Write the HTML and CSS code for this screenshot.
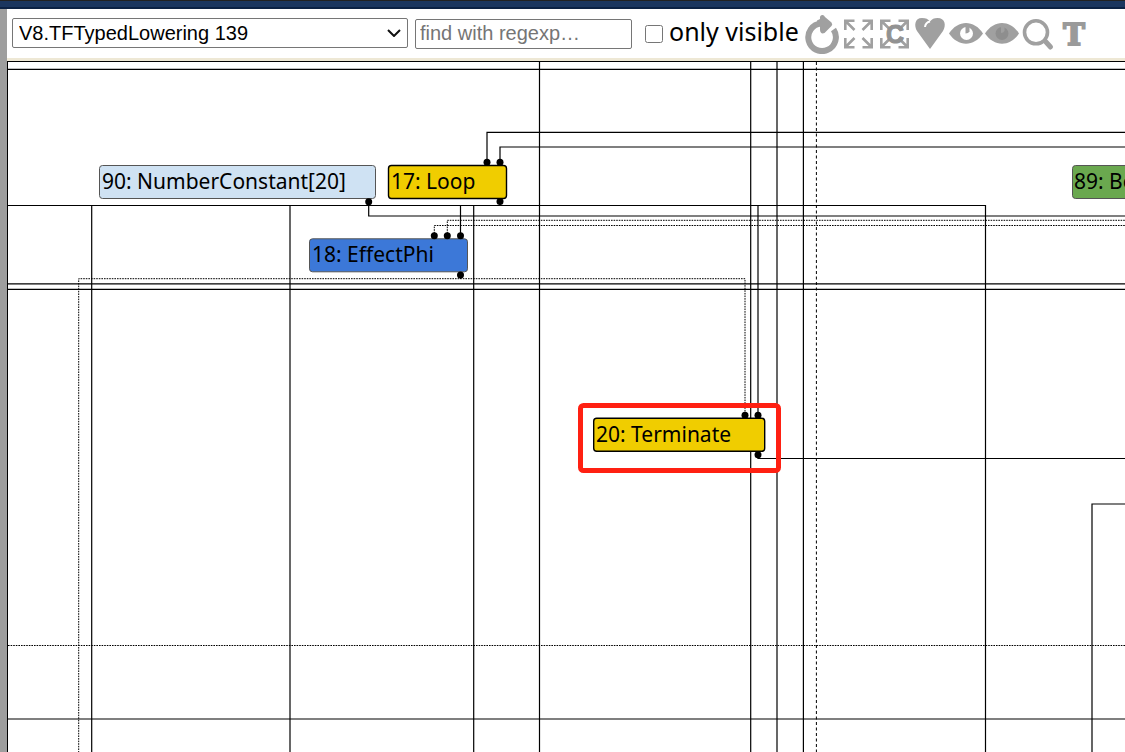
FILE: index.html
```html
<!doctype html>
<html lang="en">
<head>
<meta charset="utf-8">
<meta name="viewport" content="width=device-width, initial-scale=1">
<title>Turbolizer</title>
<link rel="stylesheet" href="styles.css">
</head>
<body>
<div class="topbar"></div>
<div class="workspace">
<div class="resizer"></div>
<main class="graph-pane">

<form class="toolbar">
  <div class="phase">
    <select class="phase-select" aria-label="Phase">
      <option>V8.TFTypedLowering 139</option>
    </select>
    <svg class="chevron" viewBox="0 0 14 8"><path d="M1 1 L7 7 L13 1"/></svg>
  </div>
  <input type="text" class="search-input" placeholder="find with regexp&hellip;" aria-label="Search">
  <div class="only-visible">
    <input type="checkbox" id="search-only-visible">
    <label for="search-only-visible">only visible</label>
  </div>
  <div class="tools">
    <button type="button" class="tool" aria-label="Layout graph"><svg viewBox="0 0 36 41">
      <path class="line" stroke-width="6" d="M17 10.500 A13.800 13.800 0 1 0 29.500 16.500"/>
      <path d="M16 6 Q15.500 2.500 18 2 Q20 1.600 21 4 L27.500 9.500 Q29 11.500 27.500 13 L20.500 20 Q16.500 21.500 16 17 V13 L13 13 V7.500 Z"/>
    </svg></button>
    <button type="button" class="tool" aria-label="Show all nodes"><svg viewBox="0 0 36 41">
      <g id="arrows">
        <path class="line" stroke-width="2.600" d="M5.300 17V7.800H14.500 M6 8.500L14.500 17"/>
        <path class="line" stroke-width="2.600" d="M31.700 17V7.800H22.500 M31 8.500L22.500 17"/>
        <path class="line" stroke-width="2.600" d="M5.300 25V34.200H14.500 M6 33.500L14.500 25"/>
        <path class="line" stroke-width="2.600" d="M31.700 25V34.200H22.500 M31 33.500L22.500 25"/>
      </g>
    </svg></button>
    <button type="button" class="tool" aria-label="Show control nodes"><svg viewBox="0 0 36 41">
      <use href="#arrows"/>
      <text class="letter-c" x="19" y="30">C</text>
    </svg></button>
    <button type="button" class="tool" aria-label="Toggle live nodes"><svg viewBox="0 0 36 41">
      <path d="M18 36 L5 18 C2 13 2.500 5 10 5 C14 5 16 6 18 8.500 C20 6 22 5 25.500 5 C33 5 34.500 12 31 18 Z"/>
      <path class="shine" d="M18 8.500 Q13.500 9.500 13 14"/>
    </svg></button>
    <button type="button" class="tool" aria-label="Show selected"><svg viewBox="0 0 36 41">
      <path id="eye" d="M1 20.500 C10 6.500 26 6.500 35 20.500 C26 34 10 34 1 20.500 Z"/>
      <circle class="iris" cx="18.500" cy="20.500" r="6.500"/>
      <path d="M17.500 13.500 h4 v5 q-1 2 -4 2 z"/>
    </svg></button>
    <button type="button" class="tool" aria-label="Hide selected"><svg viewBox="0 0 36 41">
      <use href="#eye"/>
      <circle class="dim" cx="18" cy="20.500" r="6.500"/>
      <path d="M17 14 h3.500 v4 q-1 2 -3.500 2 z"/>
    </svg></button>
    <button type="button" class="tool" aria-label="Zoom to selection"><svg viewBox="0 0 36 41">
      <circle class="line" stroke-width="3.600" cx="16" cy="19.300" r="11.500"/>
      <path class="line" stroke-width="5" stroke-linecap="round" d="M26 29 L30.500 34"/>
    </svg></button>
    <button type="button" class="tool" aria-label="Toggle types"><svg viewBox="0 0 36 41">
      <text class="letter-t" x="18" y="32">T</text>
    </svg></button>
  </div>
</form>

<div class="graph">
<svg class="graph-svg">
<g transform="translate(-8 -62)">
  <g class="edges">
    <path d="M8 69.300H4000"/>
    <path d="M8 205.500H985.500V4000"/>
    <path d="M8 283.800H4000"/>
    <path d="M8 289.300H4000"/>
    <path d="M8 719H4000"/>
    <path d="M91.700 205.500V4000"/>
    <path d="M290 205.500V4000"/>
    <path d="M473.700 205.500V4000"/>
    <path d="M539.500 62V4000"/>
    <path d="M750.700 62V4000"/>
    <path d="M777 62V4000"/>
    <path d="M803.400 62V4000"/>
    <path d="M758 205.500V416"/>
    <path d="M487 162V132.300H4000"/>
    <path d="M500 162V147H4000"/>
    <path d="M368.700 202V216H4000"/>
    <path d="M460.500 205.500V236"/>
    <path d="M500 201V205.500"/>
    <path d="M460.500 275V279"/>
    <path d="M758 455V458.500H4000"/>
    <path d="M1092 4000V504H4000"/>
  </g>
  <g class="edges effect">
    <path d="M8 645.500H4000"/>
    <path d="M78.700 4000V278.700H745V416"/>
    <path d="M434.300 236V225.500H4000"/>
    <path d="M447.300 236V220.300H4000"/>
  </g>
  <g class="edges frame-state">
    <path d="M816.400 62V4000"/>
  </g>
  <g class="nodes">
    <rect class="constant" x="99.500" y="165.500" width="276" height="33" rx="3"/>
    <rect class="control" x="388.500" y="165.500" width="118" height="33" rx="3"/>
    <rect class="phi" x="309.500" y="238.800" width="158" height="33" rx="3"/>
    <rect class="control" x="593.700" y="418.300" width="171" height="33" rx="3"/>
    <rect class="simplified" x="1072.500" y="165.500" width="200" height="33" rx="3"/>
  </g>
  <g class="ports">
    <circle cx="487" cy="162.300" r="3.500"/>
    <circle cx="500" cy="162.300" r="3.500"/>
    <circle cx="500" cy="201.500" r="3.500"/>
    <circle cx="368.700" cy="201.700" r="3.500"/>
    <circle cx="434.300" cy="235.700" r="3.500"/>
    <circle cx="447.300" cy="235.700" r="3.500"/>
    <circle cx="460.500" cy="235.700" r="3.500"/>
    <circle cx="460.500" cy="275" r="3.500"/>
    <circle cx="745" cy="415.300" r="3.500"/>
    <circle cx="758" cy="415.300" r="3.500"/>
    <circle cx="758" cy="454.700" r="3.500"/>
  </g>
  <g class="labels">
    <text x="102" y="189">90: NumberConstant[20]</text>
    <text x="391" y="189">17: Loop</text>
    <text x="312" y="262">18: EffectPhi</text>
    <text x="596" y="442">20: Terminate</text>
    <text x="1074" y="189">89: BeginRegion</text>
  </g>
  <rect class="highlight" x="580.500" y="405.500" width="198" height="65" rx="3"/>
</g>
</svg>
</div>
</main>
</div>
</body>
</html>
```
FILE: styles.css
```css
* { box-sizing:border-box }
body { margin:0; height:100vh; display:flex; flex-direction:column; background:#fff; color:#000; font-family:"Noto Sans", sans-serif; font-size:25px }
.topbar { height:9px; background:#1b365f; border-top:1px solid #222; border-bottom:2px solid #0c2244 }
.workspace { flex:1; display:flex; min-height:0 }
.resizer { width:7px; background:#9e9e9e }
.graph-pane { flex:1; min-width:0; display:flex; flex-direction:column }

/* toolbar */
.toolbar { display:flex; align-items:center; height:52px; padding:0 5px; border-bottom:3px solid #eee8d5 }
.phase { position:relative; flex:none; width:396px; height:30px; margin-bottom:2px }
.phase-select { display:block; appearance:none; width:100%; height:100%; margin:0; padding:0 6px; border:1px solid #767676; border-radius:2px; background:#fff; color:#000; font:20px "Liberation Sans", sans-serif }
.chevron { position:absolute; right:7px; top:11px; width:14px; height:8px; fill:none; stroke:#111; stroke-width:2; pointer-events:none }
.search-input { flex:none; width:217px; height:30px; margin-left:7px; padding:0 4px; border:1px solid #767676; border-radius:2px; font:20px "Liberation Sans", sans-serif }
.search-input::placeholder { color:#757575 }
.only-visible { flex:none; display:flex; align-items:center; margin:0 5px 0 13px; white-space:nowrap }
.only-visible input { width:18px; height:18px; margin:0 6px 0 0 }
.only-visible label { padding-bottom:6px }
.tools { flex:none; display:flex }
.tool { width:36px; height:41px; padding:0; border:0; background:none; fill:#a0a0a0 }
.tool svg { display:block; width:36px; height:41px }
.line { fill:none; stroke:#a0a0a0 }
.shine { fill:none; stroke:#fff; stroke-width:2 }
.iris { fill:#fff }
.dim { fill:#8e8e8e }
.letter-c { font:bold 25px "Liberation Sans", sans-serif; text-anchor:middle; fill:#929292; stroke:#929292 }
.letter-t { font:bold 29px "DejaVu Serif", serif; text-anchor:middle; fill:#9a9a9a; stroke:#9a9a9a; stroke-width:2 }

/* graph */
.graph { flex:1; min-height:0; border:1px solid #000; border-width:1px 0 0 1px }
.graph-svg { display:block; width:100%; height:100% }
.edges path { fill:none; stroke:#000; stroke-width:1.2 }
.effect path { stroke-width:1; stroke-dasharray:1.6 1 }
.frame-state path { stroke-width:1; stroke-dasharray:3 2.5 }
.nodes rect { stroke:#555 }
.nodes .constant { fill:#cfe2f3 }
.nodes .control { fill:#f0cd00; stroke:#000; stroke-width:1.4 }
.nodes .phi { fill:#3c78d8 }
.nodes .simplified { fill:#6aa84f }
.labels text { font-size:21px }
.highlight { fill:none; stroke:#ff2012; stroke-width:5 }
```
